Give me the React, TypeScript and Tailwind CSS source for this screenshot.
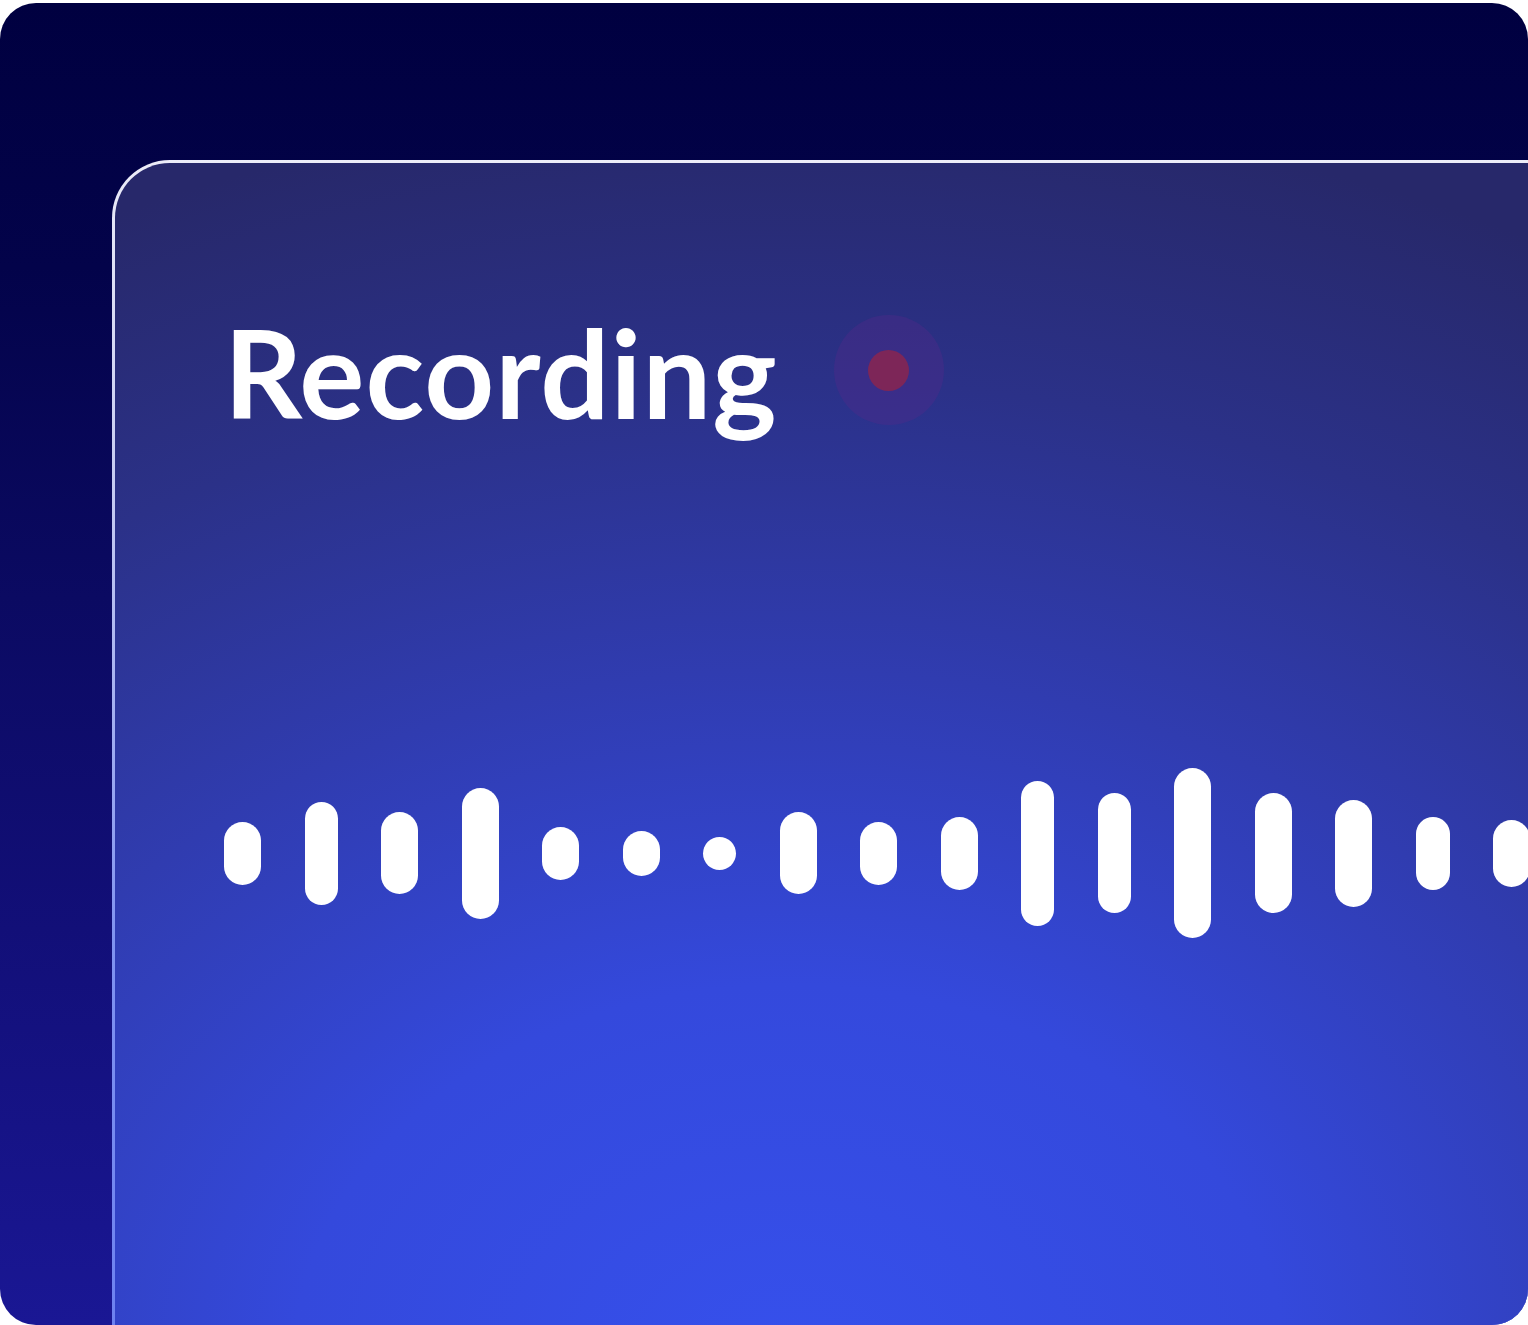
import React from 'react';

// bar widths/heights measured off the waveform, left to right
const BARS: { w: number; h: number }[] = [
  { w: 37, h: 63 },
  { w: 33, h: 103 },
  { w: 37, h: 82 },
  { w: 37, h: 131 },
  { w: 37, h: 53 },
  { w: 37, h: 45 },
  { w: 33, h: 33 },
  { w: 37, h: 82 },
  { w: 37, h: 63 },
  { w: 37, h: 73 },
  { w: 33, h: 145 },
  { w: 33, h: 120 },
  { w: 37, h: 170 },
  { w: 37, h: 120 },
  { w: 37, h: 107 },
  { w: 34, h: 73 },
  { w: 37, h: 67 },
  { w: 37, h: 90 },
];

const RecordDot: React.FC = () => (
  <div className="flex h-[110px] w-[110px] items-center justify-center rounded-full bg-[#55288a]/35">
    <div className="h-[41px] w-[41px] rounded-full bg-[#7d2658]" />
  </div>
);

const Waveform: React.FC = () => (
  <div className="flex h-[180px] items-center gap-[43.5px]">
    {BARS.map((bar, i) => (
      <div
        key={i}
        className="shrink-0 rounded-full bg-white"
        style={{ width: bar.w, height: bar.h }}
      />
    ))}
  </div>
);

export default function App() {
  return (
    <div className="h-[1325px] w-[1528px] overflow-hidden bg-white pt-[3px]">
      <div className="h-[1322px] w-[1528px] overflow-hidden rounded-[36px] bg-[linear-gradient(180deg,#000040_0%,#03034a_20%,#0b0a62_45%,#120f78_70%,#1a1794_100%)]">
        <div className="ml-[112px] mt-[157px] w-[1500px] rounded-tl-[58px] bg-[linear-gradient(180deg,#ececf8_0%,#c2c8f2_30%,#8093f0_65%,#6b80f0_100%)] pl-[3px] pt-[3px]">
          <div className="h-[1200px] rounded-tl-[55px] bg-[radial-gradient(ellipse_110%_105%_at_45%_100%,#3650ec_0%,#3449dc_30%,#303cb0_55%,#2b3188_78%,#27286a_100%)] pl-[109px] pt-[148px]">
            <div className="flex items-center">
              <h1 className="font-['Lato',sans-serif] text-[122px] font-bold leading-none tracking-[1px] text-white">
                Recording
              </h1>
              <div className="ml-[56px] mt-[-4px]">
                <RecordDot />
              </div>
            </div>
            <div className="mt-[330px]">
              <Waveform />
            </div>
          </div>
        </div>
      </div>
    </div>
  );
}
